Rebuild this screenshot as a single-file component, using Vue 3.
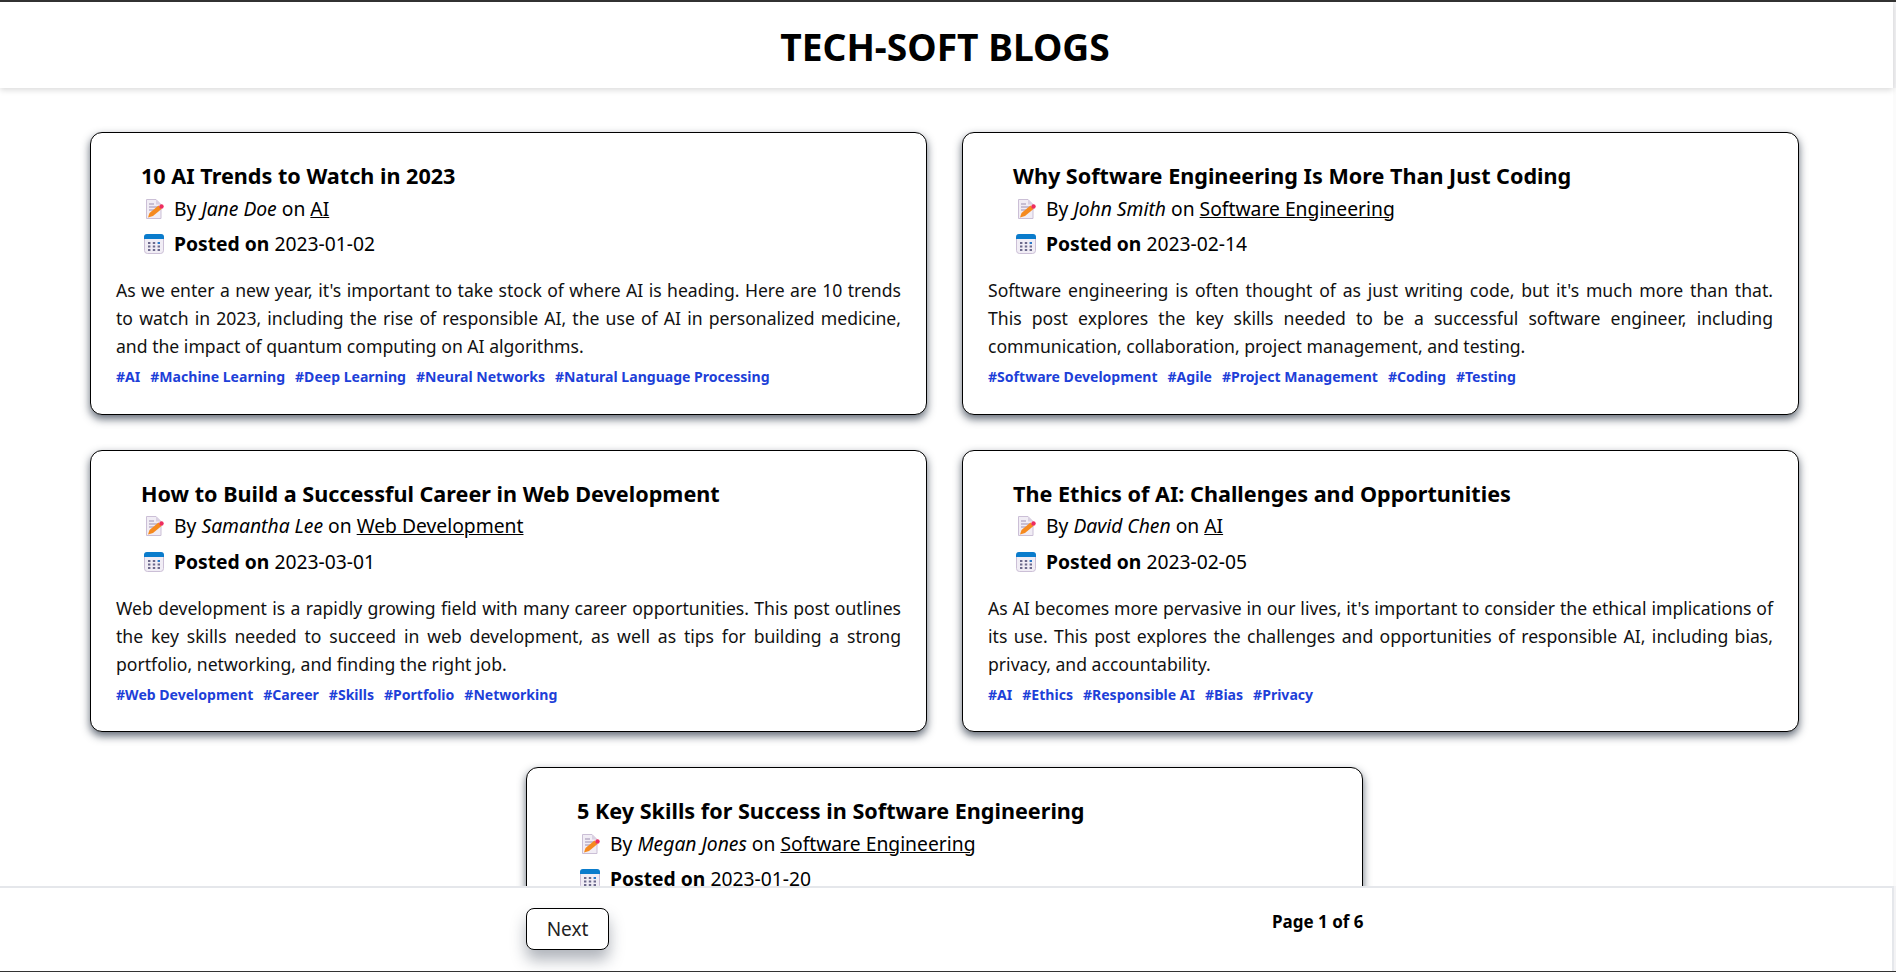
<template>
  <div class="page">
    <header class="top">
      <h1>TECH-SOFT BLOGS</h1>
    </header>

    <main class="list">
      <article v-for="post in posts" :key="post.title" class="card">
        <h2>{{ post.title }}</h2>
        <div class="meta">
          <svg class="icon" viewBox="0 0 20 20">
            <path d="M2.500 0.500h9.500l5 5v14h-14.500z" fill="#f1edf5" stroke="#cbbfd6" />
            <path d="M12 0.500v5h5z" fill="#d9d0e2" />
            <path d="M5 5h5M5 8h9M5 11h5" stroke="#9d8fb0" stroke-width="1" />
            <path d="M5.500 14l9-7.500 3 3.500-8.500 7-5 1.500z" fill="#f58a1f" />
            <circle cx="17.500" cy="7.500" r="2.200" fill="#ee2d5f" />
          </svg>
          <span>By <em>{{ post.author }}</em> on <a href="#">{{ post.category }}</a></span>
        </div>
        <div class="meta">
          <svg class="icon" viewBox="0 0 20 20">
            <rect x="0.500" y="0.500" width="19" height="19" rx="3" fill="#f1edf5" stroke="#cbbfd6" />
            <path d="M0 5V3a3 3 0 0 1 3-3h14a3 3 0 0 1 3 3v2z" fill="#0a7ccc" />
            <g fill="#6d6a8c">
              <rect x="4" y="8" width="2.400" height="2" />
              <rect x="8.800" y="8" width="2.400" height="2" />
              <rect x="13.600" y="8" width="2.400" height="2" fill="#2a78c8" />
              <rect x="4" y="11.500" width="2.400" height="2" />
              <rect x="8.800" y="11.500" width="2.400" height="2" />
              <rect x="13.600" y="11.500" width="2.400" height="2" />
              <rect x="4" y="15" width="2.400" height="2" />
              <rect x="8.800" y="15" width="2.400" height="2" />
              <rect x="13.600" y="15" width="2.400" height="2" />
            </g>
          </svg>
          <span><strong>Posted on</strong> {{ post.date }}</span>
        </div>
        <p>{{ post.text }}</p>
        <div class="tags">
          <a v-for="tag in post.tags" :key="tag" href="#">#{{ tag }}</a>
        </div>
      </article>
    </main>

    <footer class="bottom">
      <button type="button">Next</button>
      <span class="count">Page 1 of 6</span>
    </footer>
  </div>
</template>

<script setup>
const posts = [
  {
    title: '10 AI Trends to Watch in 2023',
    author: 'Jane Doe',
    category: 'AI',
    date: '2023-01-02',
    text: "As we enter a new year, it's important to take stock of where AI is heading. Here are 10 trends to watch in 2023, including the rise of responsible AI, the use of AI in personalized medicine, and the impact of quantum computing on AI algorithms.",
    tags: ['AI', 'Machine Learning', 'Deep Learning', 'Neural Networks', 'Natural Language Processing'],
  },
  {
    title: 'Why Software Engineering Is More Than Just Coding',
    author: 'John Smith',
    category: 'Software Engineering',
    date: '2023-02-14',
    text: "Software engineering is often thought of as just writing code, but it's much more than that. This post explores the key skills needed to be a successful software engineer, including communication, collaboration, project management, and testing.",
    tags: ['Software Development', 'Agile', 'Project Management', 'Coding', 'Testing'],
  },
  {
    title: 'How to Build a Successful Career in Web Development',
    author: 'Samantha Lee',
    category: 'Web Development',
    date: '2023-03-01',
    text: 'Web development is a rapidly growing field with many career opportunities. This post outlines the key skills needed to succeed in web development, as well as tips for building a strong portfolio, networking, and finding the right job.',
    tags: ['Web Development', 'Career', 'Skills', 'Portfolio', 'Networking'],
  },
  {
    title: 'The Ethics of AI: Challenges and Opportunities',
    author: 'David Chen',
    category: 'AI',
    date: '2023-02-05',
    text: "As AI becomes more pervasive in our lives, it's important to consider the ethical implications of its use. This post explores the challenges and opportunities of responsible AI, including bias, privacy, and accountability.",
    tags: ['AI', 'Ethics', 'Responsible AI', 'Bias', 'Privacy'],
  },
  {
    title: '5 Key Skills for Success in Software Engineering',
    author: 'Megan Jones',
    category: 'Software Engineering',
    date: '2023-01-20',
    text: '',
    tags: [],
  },
]
</script>

<style>
html,
body {
  margin: 0;
  overflow: hidden;
  background: #fff;
}
</style>

<style scoped>
.page {
  height: 100vh;
  display: flex;
  flex-direction: column;
  box-sizing: border-box;
  border-top: 2px solid #333;
  border-bottom: 1px solid #333;
  background: #f3f3f5;
  font-family: "Noto Sans", "Liberation Sans", sans-serif;
  color: #000;
}
.top {
  height: 86px;
  flex: none;
  box-sizing: border-box;
  padding-top: 2px;
  margin-right: 3px;
  display: flex;
  align-items: center;
  justify-content: center;
  background: #fff;
  box-shadow: 0 2px 6px rgba(0, 0, 0, 0.15);
  position: relative;
  z-index: 1;
}
h1 {
  margin: 0 3px 0 0;
  font-size: 37.2px;
  font-weight: 700;
}
.list {
  flex: 1;
  min-height: 0;
  overflow: hidden;
  box-sizing: border-box;
  padding: 44px 4px 0 0;
  border-right: 3px solid #fbfbfb;
  background: #fff;
  display: flex;
  flex-wrap: wrap;
  justify-content: center;
  align-content: flex-start;
  gap: 35px;
}
.card {
  width: 837px;
  box-sizing: border-box;
  padding: 28px 25px 25.500px;
  border: 1px solid #000;
  border-radius: 12px;
  background: #fff;
  box-shadow: 0 4px 8px rgba(30, 41, 59, 0.7);
}
h2 {
  margin: 0 0 0 25px;
  font-size: 21.6px;
  line-height: 30px;
  font-weight: 700;
}
.meta {
  display: flex;
  align-items: center;
  gap: 10px;
  margin: 5.500px 0 11.500px 28px;
  font-size: 19.300px;
  line-height: 24px;
}
.meta a {
  color: inherit;
}
.icon {
  width: 20px;
  height: 20px;
  flex: none;
}
p {
  margin: 20px 0 0;
  font-size: 17.600px;
  line-height: 28px;
  text-align: justify;
  color: #111;
}
.tags {
  display: flex;
  gap: 10px;
  margin-top: 6px;
}
.tags a {
  color: #1d40d8;
  font-size: 14.050px;
  line-height: 22px;
  font-weight: 700;
  text-decoration: none;
}
.bottom {
  height: 85px;
  flex: none;
  margin-right: 2px;
  box-sizing: border-box;
  padding: 20px 0 0 526px;
  border-top: 2px solid #e5e7eb;
  border-right: 2px solid #e5e7eb;
  background: #fff;
  display: flex;
  align-items: flex-start;
  position: relative;
}
button {
  width: 83px;
  height: 42px;
  border: 1px solid #000;
  border-radius: 8px;
  background: #fff;
  color: #222;
  font: inherit;
  font-size: 19px;
  box-shadow: 0 10px 15px rgba(30, 41, 59, 0.35);
}
.count {
  position: absolute;
  left: 1272px;
  top: 22px;
  font-size: 17px;
  font-weight: 700;
}
</style>
